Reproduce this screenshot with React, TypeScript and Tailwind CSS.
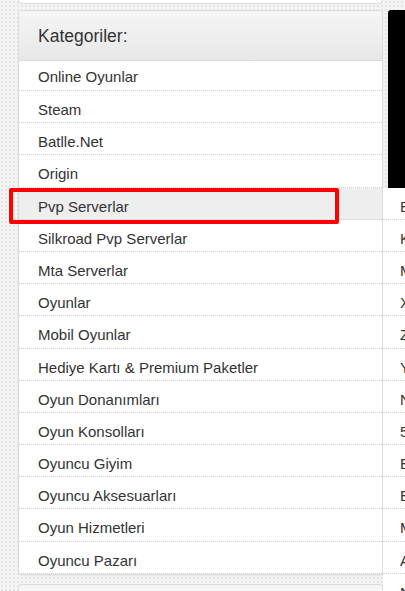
const categories = [
  "Online Oyunlar",
  "Steam",
  "Batlle.Net",
  "Origin",
  "Pvp Serverlar",
  "Silkroad Pvp Serverlar",
  "Mta Serverlar",
  "Oyunlar",
  "Mobil Oyunlar",
  "Hediye Kartı & Premium Paketler",
  "Oyun Donanımları",
  "Oyun Konsolları",
  "Oyuncu Giyim",
  "Oyuncu Aksesuarları",
  "Oyun Hizmetleri",
  "Oyuncu Pazarı",
];

// sub menu letters, cut off by the window edge
const subItems = ["B", "K", "M", "X", "Z", "Y", "N", "5", "E", "E", "M", "A", "N"];

export default function App() {
  return (
    <div
      className="relative w-[405px] h-[591px] overflow-hidden bg-[#f4f4f4] bg-[radial-gradient(circle,#e4e4e4_1px,transparent_1px)] bg-[length:4px_4px] text-[#333]"
      style={{ fontFamily: '"Liberation Sans", Arial, sans-serif' }}
    >
      {/* previous card, only its bottom edge shows */}
      <div className="ml-[18px] w-[365px] h-[4px] bg-white border border-t-0 border-[#dcdcdc] rounded-b-[4px]" />

      <div className="flex mt-[6px]">
        <div className="ml-[18px] w-[365px] shrink-0 flex flex-col">
          <div className="bg-white border border-[#dcdcdc] rounded-[4px] shadow-[0_1px_2px_rgba(0,0,0,0.06)] overflow-hidden">
            <div className="h-[50px] pl-[19px] pt-[13px] bg-linear-to-b from-[#f5f5f5] to-[#e8e8e8] border-b border-[#dadada]">
              <span className="block text-[17.5px] leading-[24px] text-[#333]">Kategoriler:</span>
            </div>
            {categories.map((c, i) => (
              <div
                key={c}
                className={
                  i === 0
                    ? "h-[30px] pl-[19px] pt-[6px] border-b border-dotted border-[#cfcfcf] text-[15px] leading-[20px]"
                    : c === "Pvp Serverlar"
                    ? "h-[32.2px] pl-[19px] pt-[9px] border-b border-dotted border-[#cfcfcf] text-[15px] leading-[20px] bg-[#eeeeee]"
                    : "h-[32.2px] pl-[19px] pt-[9px] border-b border-dotted border-[#cfcfcf] text-[15px] leading-[20px]"
                }
              >
                {c}
              </div>
            ))}
          </div>
          <div className="mt-[9px] h-[30px] bg-[#f6f6f6] border border-[#dcdcdc] rounded-t-[4px]" />
        </div>

        {/* black banner on the right */}
        <div className="ml-[5px] w-[20px] shrink-0 h-[180px] bg-black rounded-tl-[3px]" />
      </div>

      {/* open sub menu */}
      <div className="absolute left-[383px] top-[187.6px] w-[200px] bg-white">
        {subItems.map((s, i) => (
          <div
            key={i}
            className="h-[32.2px] pl-[17px] pt-[9px] border-b border-dotted border-[#cfcfcf] text-[15px] leading-[20px] whitespace-nowrap"
          >
            {s}
          </div>
        ))}
      </div>

      {/* highlight box */}
      <div className="absolute left-[9px] top-[188px] w-[330px] h-[36px] border-4 border-[#ff0000] rounded-[2px]" />
    </div>
  );
}
